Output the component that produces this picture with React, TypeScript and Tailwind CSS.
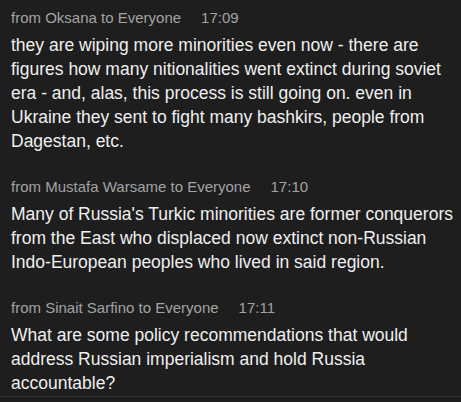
type Message = {
  from: string;
  time: string;
  text: string;
};

const messages: Message[] = [
  {
    from: 'from Oksana to Everyone',
    time: '17:09',
    text: 'they are wiping more minorities even now - there are figures how many nitionalities went extinct during soviet era - and, alas, this process is still going on. even in Ukraine they sent to fight many bashkirs, people from Dagestan, etc.',
  },
  {
    from: 'from Mustafa Warsame to Everyone',
    time: '17:10',
    text: "Many of Russia's Turkic minorities are former conquerors from the East who displaced now extinct non-Russian Indo-European peoples who lived in said region.",
  },
  {
    from: 'from Sinait Sarfino to Everyone',
    time: '17:11',
    text: 'What are some policy recommendations that would address Russian imperialism and hold Russia accountable?',
  },
];

export default function App() {
  return (
    <div
      className="h-[402px] w-full overflow-hidden bg-[#1e1e1e] flex flex-col"
      style={{ fontFamily: '"Liberation Sans", Arial, sans-serif' }}
    >
      <div className="flex flex-col gap-6 pl-[11px] pr-[4px] pt-2">
        {messages.map((m) => (
          <div key={m.time} className="flex flex-col">
            <div className="flex h-5 items-center text-[15px] leading-5 text-[#a3a3a3]">
              <span>{m.from}</span>
              <span className="ml-5">{m.time}</span>
            </div>
            <p className="mt-[5px] text-[17.5px] leading-6 text-[#efefef]">{m.text}</p>
          </div>
        ))}
      </div>
      <div className="mt-px h-px w-full bg-[#333333]"></div>
    </div>
  );
}
